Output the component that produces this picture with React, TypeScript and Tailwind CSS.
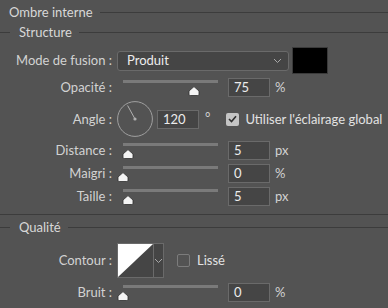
import React from "react";

const labelCls = "w-[113px] shrink-0 text-right pr-[1px] text-[#d2d2d2] whitespace-nowrap";

function Thumb() {
    return (
        <svg width="12" height="10" viewBox="0 0 12 10">
            <path d="M6 0.6 L11 5 L11 8.4 Q11 9.5 9.8 9.5 L2.2 9.5 Q1 9.5 1 8.4 L1 5 Z" fill="#f4f4f4" stroke="#2e2e2e" strokeWidth="0.8" />
        </svg>
    );
}

function Slider({ value }: { value: number }) {
    return (
        <div className="relative w-[101px] h-[19px] shrink-0">
            <div className="ml-[6px] mt-[4px] w-[95px] h-[3px] bg-[#7a7a7a]" />
            <div className="absolute top-[6px]" style={{ left: value * 0.95 }}>
                <Thumb />
            </div>
        </div>
    );
}

function NumInput({ value, className = "" }: { value: string; className?: string }) {
    return (
        <div className={"w-[42px] h-[19px] shrink-0 bg-[#454545] border border-[#6a6a6a] pl-[5px] flex items-center text-[#ececec] " + className}>
            {value}
        </div>
    );
}

function Heading({ title, indent }: { title: string; indent: boolean }) {
    return (
        <div className="flex items-center h-full whitespace-nowrap">
            {indent && <div className="w-[10px] h-px bg-[#3c3c3c] mr-[9px]" />}
            <span className={indent ? "text-[#d8d8d8]" : "pl-[9px] text-[#d8d8d8]"}>{title}</span>
            <div className="flex-1 h-px bg-[#3c3c3c] ml-[7px]" />
        </div>
    );
}

function SliderRow({ label, value, pos, unit, className = "" }: { label: string; value: string; pos: number; unit: string; className?: string }) {
    return (
        <div className={"flex items-center h-[19px] " + className}>
            <div className={labelCls}>{label}</div>
            <div className="ml-[4px]">
                <Slider value={pos} />
            </div>
            <NumInput value={value} className="ml-[10px]" />
            <span className="ml-[5px] text-[#d2d2d2]">{unit}</span>
        </div>
    );
}

function Chevron({ color = "#a8a8a8" }: { color?: string }) {
    return (
        <svg width="9" height="6" viewBox="0 0 9 6">
            <path d="M1 1 L4.5 4.5 L8 1" fill="none" stroke={color} strokeWidth="1" />
        </svg>
    );
}

export default function App() {
    return (
        <div
            className="w-[388px] h-[308px] bg-[#535353] overflow-hidden text-[13px] leading-none"
            style={{ fontFamily: 'Lato, "Noto Sans", sans-serif' }}
        >
            <div className="h-[24px]">
                <Heading title="Ombre interne" indent={false} />
            </div>
            <div className="h-[16px]">
                <Heading title="Structure" indent={true} />
            </div>

            {/* Mode de fusion */}
            <div className="flex items-center h-[27px] mt-[7px]">
                <div className={labelCls}>Mode de fusion :</div>
                <div className="ml-[4px] w-[172px] h-[20px] rounded-[3px] bg-[#454545] border border-[#6a6a6a] flex items-center justify-between pl-[9px] pr-[6px] text-[#ececec]">
                    <span>Produit</span>
                    <Chevron />
                </div>
                <div className="ml-[3px] w-[36px] h-[27px] bg-black border border-[#3a3a3a]" />
            </div>

            <SliderRow label="Opacité :" value="75" pos={75} unit="%" className="mt-[4px]" />

            {/* Angle */}
            <div className="flex items-center h-[36px] mt-[4px]">
                <div className={labelCls}>Angle :</div>
                <svg className="ml-[4px] shrink-0" width="36" height="36" viewBox="0 0 36 36">
                    <circle cx="18" cy="18" r="17.4" fill="none" stroke="#a0a0a0" strokeWidth="1" />
                    <line x1="18" y1="18" x2="10.6" y2="4.5" stroke="#b0b0b0" strokeWidth="1" />
                    <circle cx="18" cy="18" r="1.6" fill="#b0b0b0" />
                </svg>
                <NumInput value="120" className="ml-[4px]" />
                <span className="ml-[6px] text-[#d2d2d2] self-start mt-[10px]">°</span>
                <div className="ml-[16px] w-[13px] h-[13px] shrink-0 rounded-[2px] bg-[#c4c4c4] flex items-center justify-center">
                    <svg width="9" height="8" viewBox="0 0 9 8">
                        <path d="M1 4 L3.5 6.5 L8 1.2" fill="none" stroke="#2f2f2f" strokeWidth="1.6" />
                    </svg>
                </div>
                <span className="ml-[6px] text-[#e2e2e2] whitespace-nowrap">Utiliser l'éclairage global</span>
            </div>

            <SliderRow label="Distance :" value="5" pos={5} unit="px" className="mt-[4px]" />
            <SliderRow label="Maigri :" value="0" pos={0} unit="%" className="mt-[4px]" />
            <SliderRow label="Taille :" value="5" pos={5} unit="px" className="mt-[4px]" />

            <div className="h-px bg-[#3c3c3c] mt-[8px]" />

            <div className="h-[16px] mt-[4px]">
                <Heading title="Qualité" indent={true} />
            </div>

            {/* Contour */}
            <div className="flex items-center h-[35px] mt-[8px]">
                <div className={labelCls}>Contour :</div>
                <div className="ml-[4px] w-[47px] h-[35px] border border-[#6a6a6a] flex shrink-0">
                    <svg width="35" height="33" viewBox="0 0 35 33" preserveAspectRatio="none">
                        <rect width="35" height="33" fill="#454545" />
                        <polygon points="0,0 35,0 0,33" fill="#ffffff" />
                    </svg>
                    <div className="flex-1 border-l border-[#6a6a6a] bg-[#454545] flex items-center justify-center">
                        <Chevron />
                    </div>
                </div>
                <div className="ml-[13px] w-[13px] h-[13px] rounded-[2px] border border-[#7c7c7c]" />
                <span className="ml-[7px] text-[#e2e2e2]">Lissé</span>
            </div>

            <SliderRow label="Bruit :" value="0" pos={0} unit="%" className="mt-[5px]" />
        </div>
    );
}
